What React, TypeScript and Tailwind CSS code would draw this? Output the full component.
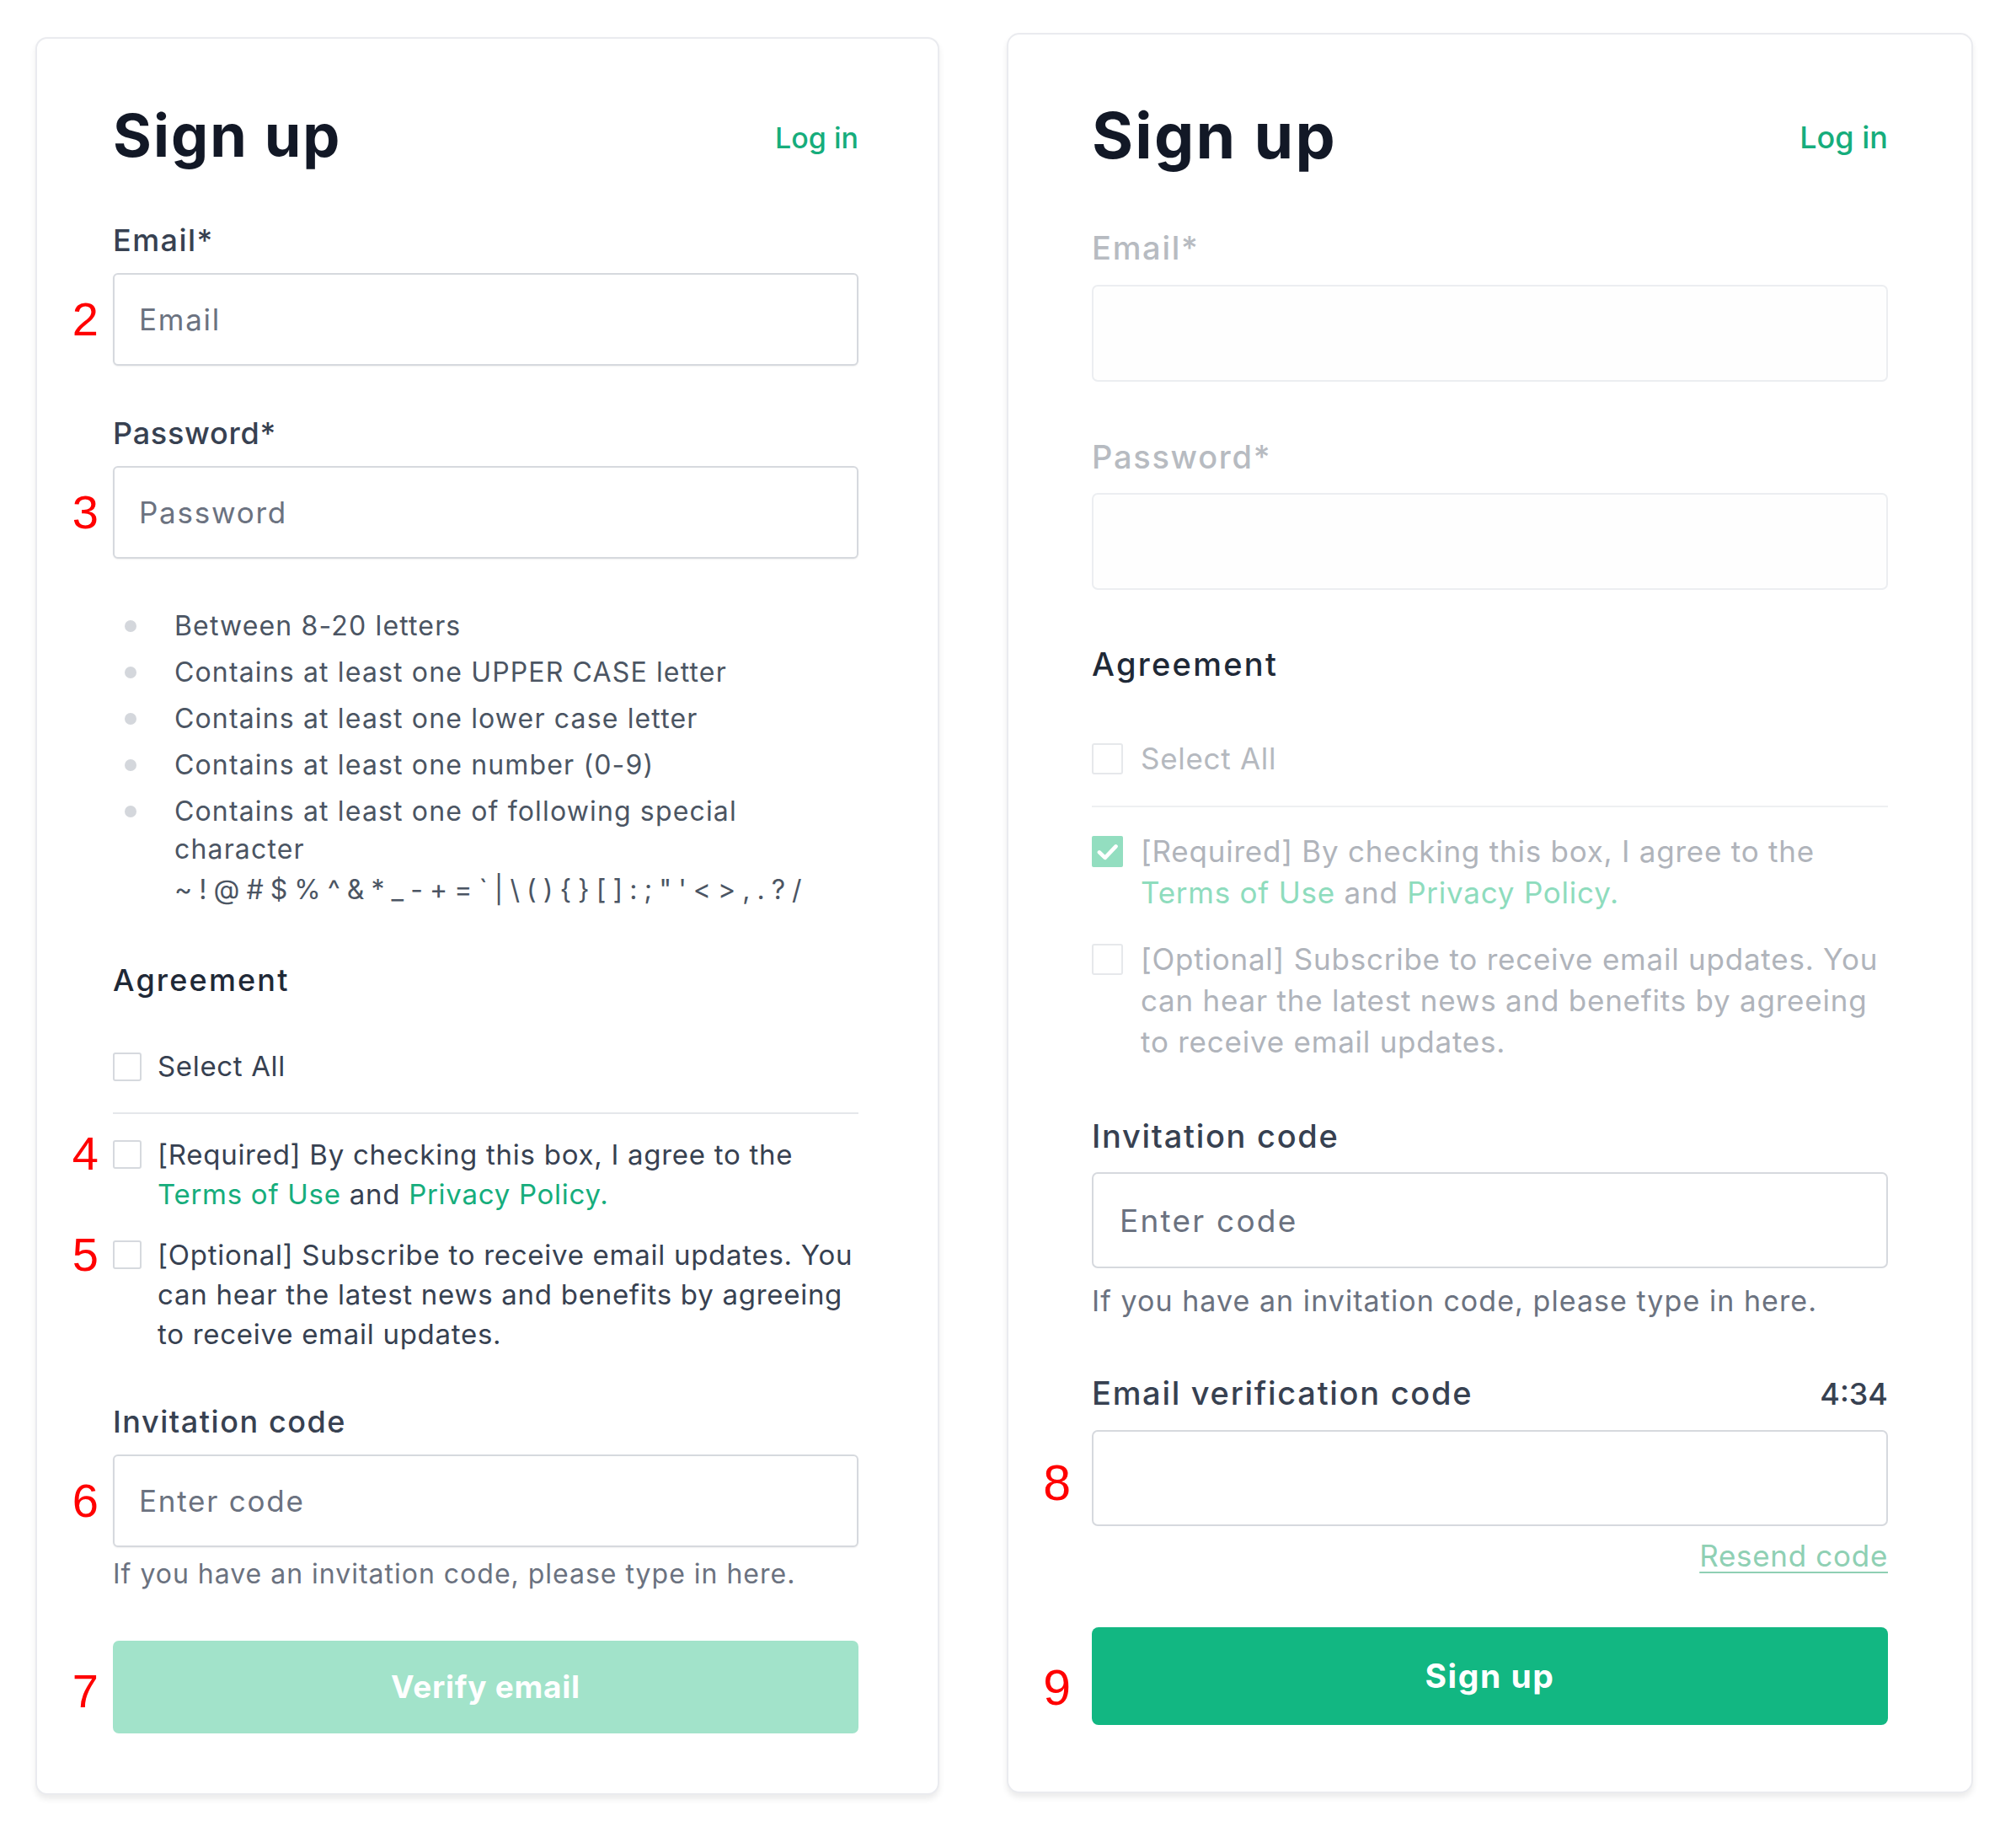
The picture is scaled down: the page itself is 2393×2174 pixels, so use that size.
import React from "react";

function Num({ n, className }: { n: string; className: string }) {
  return (
    <span
      className={
        "absolute right-full top-1/2 -translate-y-1/2 font-['Liberation_Sans',Arial,sans-serif] leading-none text-[#ff0000] " +
        className
      }
    >
      {n}
    </span>
  );
}

function Check({ className, checked }: { className: string; checked?: boolean }) {
  return (
    <span className={"flex shrink-0 items-center justify-center " + className}>
      {checked ? (
        <svg viewBox="0 0 24 24" className="h-full w-full" fill="none" stroke="#ffffff" strokeWidth="3" strokeLinecap="round" strokeLinejoin="round">
          <polyline points="5.8,12.6 10.2,16.8 18.5,8" />
        </svg>
      ) : null}
    </span>
  );
}

const SPECIAL = '~ ! @ # $ % ^ & * _ - + = ` | \\ ( ) { } [ ] : ; " \' < > , . ? /';

function LeftCard() {
  const inputCls =
    "block h-[110px] w-full rounded-[6px] border-2 border-[#d6d9de] bg-white pl-[29px] text-[35px] tracking-[0.05em] text-[#374151] shadow-[0_1px_2px_rgba(0,0,0,0.06)] outline-none placeholder:text-[#6b7280]";
  return (
    <div className="mt-[44px] w-[1073px] shrink-0 rounded-[14px] border-2 border-[#eaebef] bg-white pl-[90px] pr-[94px] pt-[80px] pb-[71px] shadow-[0_5px_7px_rgba(0,0,0,0.08)]">
      <div className="flex h-[70px] items-center justify-between">
        <h1 className="text-[70px] font-bold leading-none tracking-[0.03em] text-[#121826]">Sign up</h1>
        <a className="mt-[4px] text-[34px] font-medium text-[#16ad7c]">Log in</a>
      </div>

      <div className="mt-[69px] flex h-[40px] items-center text-[36px] font-medium tracking-[0.04em] text-[#374151]">Email*</div>
      <div className="relative mt-[19px]">
        <Num n="2" className="mr-[17px] text-[56px]" />
        <input readOnly placeholder="Email" className={inputCls} />
      </div>

      <div className="mt-[60px] flex h-[40px] items-center text-[36px] font-medium tracking-[0.02em] text-[#374151]">Password*</div>
      <div className="relative mt-[19px]">
        <Num n="3" className="mr-[17px] text-[56px]" />
        <input readOnly placeholder="Password" className={inputCls} />
      </div>

      <ul className="mt-[57px] flex flex-col gap-[10px] text-[32px] leading-[45px] tracking-[0.036em] text-[#4b5563]">
        {["Between 8-20 letters", "Contains at least one UPPER CASE letter", "Contains at least one lower case letter", "Contains at least one number (0-9)"].map((t) => (
          <li key={t} className="flex">
            <span className="flex h-[45px] w-[73px] shrink-0 items-center">
              <span className="ml-[14px] h-[14px] w-[14px] rounded-full bg-[#d4d7dc]" />
            </span>
            <span className="whitespace-nowrap">{t}</span>
          </li>
        ))}
        <li className="flex">
          <span className="flex h-[45px] w-[73px] shrink-0 items-center">
            <span className="ml-[14px] h-[14px] w-[14px] rounded-full bg-[#d4d7dc]" />
          </span>
          <span className="whitespace-nowrap">
            Contains at least one of following special
            <br />
            character
            <span className="mt-[3px] block tracking-[-0.015em]">{SPECIAL}</span>
          </span>
        </li>
      </ul>

      <div className="mt-[65px] flex h-[40px] items-center text-[36px] font-medium tracking-[0.06em] text-[#1f2937]">Agreement</div>

      <div className="mt-[63px] flex h-[40px] items-center">
        <Check className="h-[34px] w-[34px] rounded-[3px] border-2 border-[#d6d9de] bg-white" />
        <span className="ml-[19px] text-[33px] tracking-[0.02em] text-[#374151]">Select All</span>
      </div>

      <div className="mt-[34px] h-[2px] bg-[#e5e7eb]" />

      <div className="relative mt-[25px] flex items-start">
        <Num n="4" className="mr-[17px] top-[22px] text-[56px]" />
        <Check className="mt-[6px] h-[34px] w-[34px] rounded-[3px] border-2 border-[#d6d9de] bg-white" />
        <p className="ml-[19px] whitespace-nowrap text-[33px] leading-[47px] tracking-[0.022em] text-[#374151]">
          [Required] By checking this box, I agree to the
          <br />
          <span className="text-[#16ad7c]">Terms of Use</span> and <span className="text-[#16ad7c]">Privacy Policy.</span>
        </p>
      </div>

      <div className="relative mt-[25px] flex items-start">
        <Num n="5" className="mr-[17px] top-[23px] text-[56px]" />
        <Check className="mt-[6px] h-[34px] w-[34px] rounded-[3px] border-2 border-[#d6d9de] bg-white" />
        <p className="ml-[19px] whitespace-nowrap text-[33px] leading-[47px] tracking-[0.022em] text-[#374151]">
          [Optional] Subscribe to receive email updates. You
          <br />
          can hear the latest news and benefits by agreeing
          <br />
          to receive email updates.
        </p>
      </div>

      <div className="mt-[60px] flex h-[40px] items-center text-[36px] font-medium tracking-[0.043em] text-[#374151]">Invitation code</div>
      <div className="relative mt-[19px]">
        <Num n="6" className="mr-[17px] text-[56px]" />
        <input readOnly placeholder="Enter code" className={inputCls} />
      </div>
      <div className="mt-[12px] flex h-[40px] items-center whitespace-nowrap text-[32px] tracking-[0.031em] text-[#6b7280]">
        If you have an invitation code, please type in here.
      </div>

      <div className="relative mt-[59px]">
        <Num n="7" className="mr-[17px] mt-[5px] text-[56px]" />
        <button className="flex h-[110px] w-full items-center justify-center rounded-[7px] bg-[#a2e3ca] text-[37px] font-bold tracking-[0.02em] text-white">
          Verify email
        </button>
      </div>
    </div>
  );
}

function RightCard() {
  const labelCls = "flex h-[43px] items-center text-[38px] font-medium tracking-[0.045em]";
  return (
    <div className="mt-[39px] w-[1147px] shrink-0 rounded-[15px] border-2 border-[#eaebef] bg-white px-[99px] pt-[82px] pb-[79px] shadow-[0_5px_7px_rgba(0,0,0,0.08)]">
      <div className="flex h-[75px] items-center justify-between">
        <h1 className="text-[75px] font-bold leading-none tracking-[0.03em] text-[#121826]">Sign up</h1>
        <a className="mt-[5px] text-[36px] font-medium text-[#16ad7c]">Log in</a>
      </div>

      <div className={"mt-[75px] text-[#b7bbc1] " + labelCls}>Email*</div>
      <div className="mt-[22px] h-[115px] rounded-[7px] border-2 border-[#eceef1] bg-[#fefefe]" />

      <div className={"mt-[68px] text-[#b7bbc1] " + labelCls}>Password*</div>
      <div className="mt-[21px] h-[115px] rounded-[7px] border-2 border-[#eceef1] bg-[#fefefe]" />

      <div className="mt-[67px] flex h-[43px] items-center text-[38px] font-medium tracking-[0.06em] text-[#1f2937]">Agreement</div>

      <div className="mt-[69px] flex h-[43px] items-center">
        <Check className="h-[37px] w-[37px] rounded-[3px] border-2 border-[#e6e8eb] bg-white" />
        <span className="ml-[21px] text-[35px] tracking-[0.02em] text-[#b5b9bf]">Select All</span>
      </div>

      <div className="mt-[34px] h-[2px] bg-[#eef0f2]" />

      <div className="mt-[28px] flex items-start">
        <Check checked className="mt-[6px] h-[37px] w-[37px] rounded-[2px] bg-[#93dec0]" />
        <p className="ml-[21px] whitespace-nowrap text-[35px] leading-[49px] tracking-[0.022em] text-[#b0b4bb]">
          [Required] By checking this box, I agree to the
          <br />
          <span className="text-[#8edcbd]">Terms of Use</span> and <span className="text-[#8edcbd]">Privacy Policy.</span>
        </p>
      </div>

      <div className="mt-[30px] flex items-start">
        <Check className="mt-[6px] h-[37px] w-[37px] rounded-[3px] border-2 border-[#e6e8eb] bg-white" />
        <p className="ml-[21px] whitespace-nowrap text-[35px] leading-[49px] tracking-[0.022em] text-[#b0b4bb]">
          [Optional] Subscribe to receive email updates. You
          <br />
          can hear the latest news and benefits by agreeing
          <br />
          to receive email updates.
        </p>
      </div>

      <div className={"mt-[66px] text-[#374151] " + labelCls}>Invitation code</div>
      <input
        readOnly
        placeholder="Enter code"
        className="mt-[21px] block h-[114px] w-full rounded-[7px] border-2 border-[#d6d9de] bg-white pl-[31px] text-[37px] tracking-[0.06em] text-[#374151] outline-none placeholder:text-[#6b7280]"
      />
      <div className="mt-[17px] flex h-[43px] items-center whitespace-nowrap text-[34px] tracking-[0.031em] text-[#6b7280]">
        If you have an invitation code, please type in here.
      </div>

      <div className={"mt-[67px] justify-between text-[#374151] " + labelCls}>
        <span>Email verification code</span>
        <span className="text-[36px] tracking-normal">4:34</span>
      </div>
      <div className="relative mt-[22px]">
        <Num n="8" className="mr-[25px] mt-[6px] text-[59px]" />
        <input readOnly className="block h-[114px] w-full rounded-[7px] border-2 border-[#d6d9de] bg-white outline-none" />
      </div>
      <div className="mt-[14px] flex h-[43px] items-center justify-end">
        <a className="text-[35px] tracking-[0.02em] text-[#8fd0b4] underline decoration-[2px] underline-offset-[6px]">Resend code</a>
      </div>

      <div className="relative mt-[63px]">
        <Num n="9" className="mr-[25px] mt-[14px] text-[59px]" />
        <button className="flex h-[116px] w-full items-center justify-center rounded-[8px] bg-[#12b782] text-[39px] font-bold tracking-[0.04em] text-white">
          Sign up
        </button>
      </div>
    </div>
  );
}

export default function App() {
  return (
    <div className="relative flex h-[2174px] w-[2393px] items-start gap-[80px] overflow-hidden bg-white pl-[42px] font-['Inter','Noto_Sans',sans-serif]">
      <LeftCard />
      <RightCard />
    </div>
  );
}
